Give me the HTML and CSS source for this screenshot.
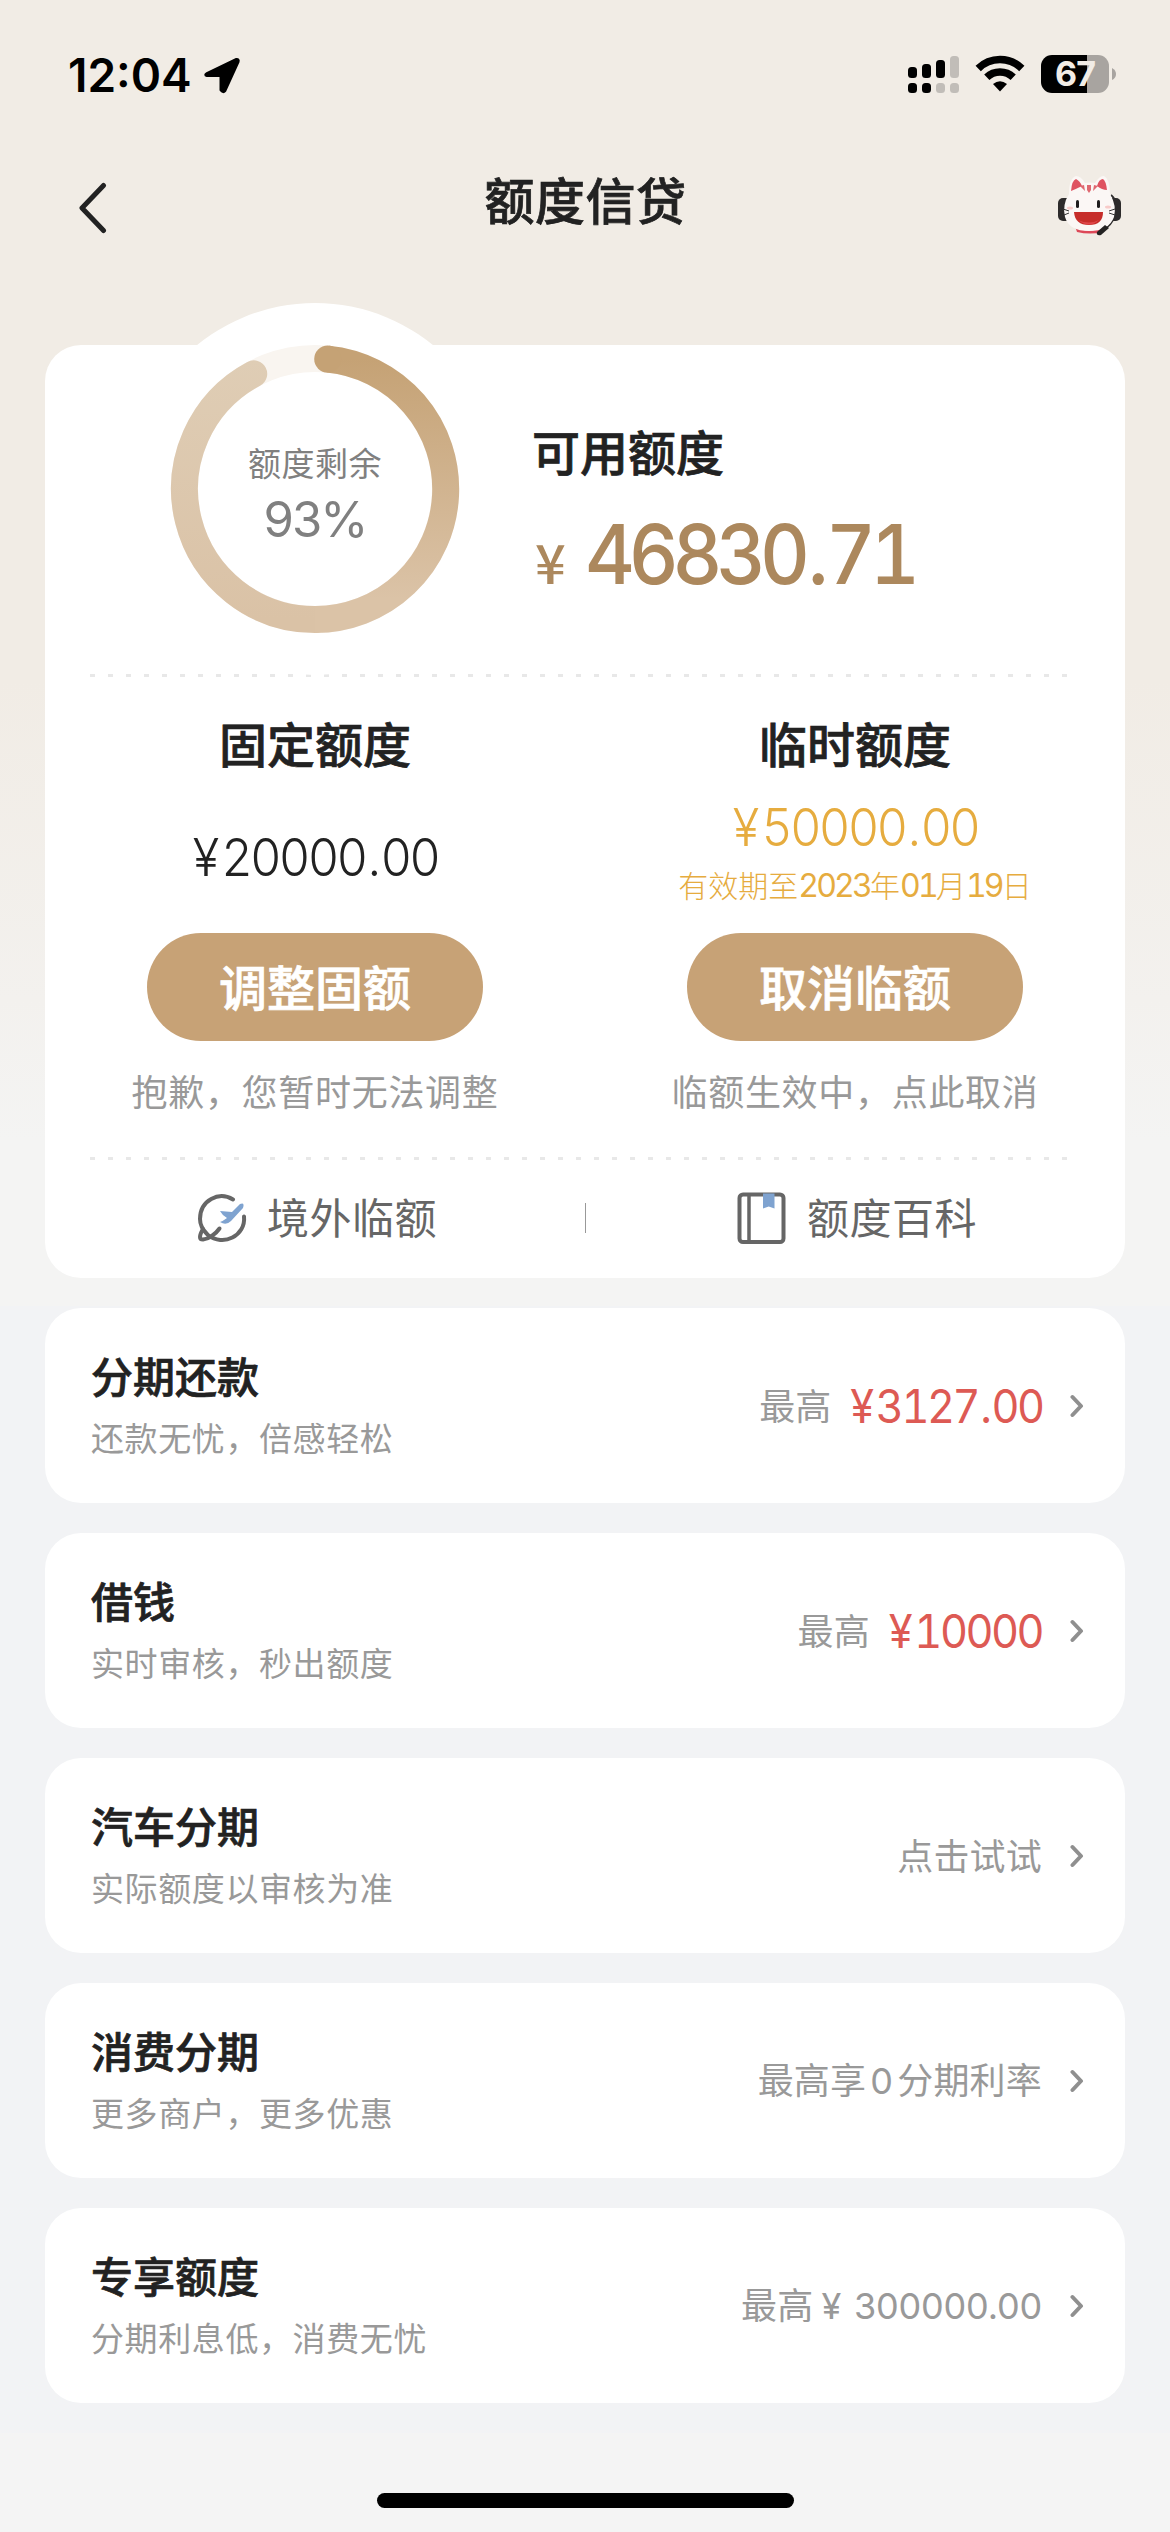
FILE: index.html
```html
<!DOCTYPE html>
<html lang="zh-CN">
<head>
<meta charset="utf-8">
<title>额度信贷</title>
<link rel="stylesheet" href="styles.css">
</head>
<body>
<div class="screen">
  <header class="status">
    <div class="status-left">
      <span class="time">12:04</span>
      <svg class="location" width="38" height="38" viewBox="0 0 38 38"><path d="M4 17.500L33 3.500Q36 3 35 6L22 34.500Q20 37 18 34V19.500H4Q1.500 18.800 4 17.500Z" stroke="#000" stroke-width="3" stroke-linejoin="round"/></svg>
    </div>
    <div class="status-right">
      <svg width="51" height="38" viewBox="0 0 51 38">
        <g><rect x="0" y="12" width="9" height="11" rx="3.500"/><rect x="14" y="9" width="9" height="14" rx="3.500"/><rect x="28" y="5" width="9" height="18" rx="3.500"/><rect x="0" y="28" width="9" height="10" rx="3.500"/><rect x="14" y="28" width="9" height="10" rx="3.500"/></g>
        <g fill="#c1bdb8"><rect x="42" y="1" width="9" height="22" rx="3.500"/><rect x="28" y="28" width="9" height="10" rx="3.500"/><rect x="42" y="28" width="9" height="10" rx="3.500"/></g>
      </svg>
      <svg class="wifi" width="50" height="38" viewBox="0 0 50 38">
        <g fill="none" stroke="#000" stroke-width="7.500"><path d="M3.200 13.500A31 31 0 0 1 46.800 13.500"/><path d="M11.800 22.300A19 19 0 0 1 38.200 22.300"/></g>
        <path d="M18 29Q25 23.500 32 29L25 36.500Z"/>
      </svg>
      <div class="battery"><span class="battery-body">67</span><svg width="4" height="12" viewBox="0 0 4 12"><path d="M0 0Q4 2 4 6T0 12Z" fill="#a8a4a0"/></svg></div>
    </div>
  </header>

  <nav class="navbar">
    <svg class="back" width="30" height="52" viewBox="0 0 30 52"><path d="M26.500 3.500L5 26L26.500 48.500" fill="none" stroke="#222" stroke-width="5" stroke-linecap="round" stroke-linejoin="round"/></svg>
    <h1 class="nav-title">额度信贷</h1>
    <svg class="mascot" width="64" height="62" viewBox="0 0 64 62">
      <rect x="0" y="23" width="13" height="23" rx="5" fill="#2d2b2b"/><rect x="50" y="23" width="13" height="23" rx="5" fill="#2d2b2b"/>
      <path d="M53 20Q59 25 58 34Q59 44 47 54" fill="none" stroke="#2d2b2b" stroke-width="2"/>
      <path d="M17 51Q31 61 47 50L45 57Q32 60 19 57Z" fill="#dd4858"/>
      <path d="M11 19Q11 3 18 1Q23 1 27 8Q31 7 37 8Q42 0 46 1Q52 4 52 19Q59 31 56 42Q51 56 31 56Q11 56 7 42Q4 30 11 19Z" fill="#fbf7f5"/>
      <path d="M13 16Q14 5 18 4Q22 6 24 11Q18 14 13 16Z" fill="#df5361"/><path d="M39 11Q41 4 45 4Q48 6 49 15Q44 15 39 11Z" fill="#df5361"/>
      <path d="M29 10H33V15L31 18L29 15ZM22 11L27 16L26 10ZM36 10L35 16L40 11Z" fill="#df6870"/>
      <rect x="18" y="25" width="3" height="8" rx="1.500" fill="#1e1c1c"/><rect x="39" y="25" width="3" height="8" rx="1.500" fill="#1e1c1c"/>
      <ellipse cx="12" cy="33" rx="3" ry="1.500" fill="#f8cbc9"/><ellipse cx="50" cy="32" rx="3" ry="1.500" fill="#f8cbc9"/>
      <path d="M5 34L11 36M6 40L11 38M57 34L51 36M57 40L51 38" stroke="#333" stroke-width="1"/>
      <path d="M16 37H45Q45 50 31 50Q17 50 16 37Z" fill="#c62d2a"/><path d="M20 45Q31 50 41 45Q36 49.500 31 49.500T20 45Z" fill="#e0474a"/>
      <path d="M39 57L47 50L51 53L43 60Q38 61 39 57Z" fill="#242222"/>
    </svg>
  </nav>

  <main class="content">
    <section class="card hero">
      <div class="summary">
        <div class="gauge">
          <svg width="372" height="372" viewBox="-186 -186 372 372">
            <defs>
              <linearGradient id="g1" x1="0" y1="-130" x2="0" y2="110" gradientUnits="userSpaceOnUse"><stop offset="0" stop-color="#c5a275"/><stop offset="1" stop-color="#dbc3a7"/></linearGradient>
              <linearGradient id="g2" x1="0" y1="130" x2="0" y2="-130" gradientUnits="userSpaceOnUse"><stop offset="0" stop-color="#dac2a6"/><stop offset="1" stop-color="#dfcdb5"/></linearGradient>
            </defs>
            <circle r="186" fill="#fff"/>
            <g fill="none" stroke-width="27">
              <circle r="130.500" stroke="#f9f5f0"/>
              <path d="M0 130.500A130.500 130.500 0 0 1 -61.300 -115.200" stroke="url(#g2)" stroke-linecap="round"/>
              <path d="M12.700 -129.900A130.500 130.500 0 0 1 0 130.500" stroke="url(#g1)"/>
            </g>
            <circle cx="12.700" cy="-129.900" r="13.500" fill="#c5a275"/>
          </svg>
          <div class="gauge-text"><span class="gauge-label">额度剩余</span><span class="gauge-value">93%</span></div>
        </div>
        <div class="available">
          <h2 class="heading">可用额度</h2>
          <p class="total"><span class="total-sign">¥</span><span class="num total-num">46830<i class="point">.</i>71</span></p>
        </div>
      </div>
      <div class="dash"></div>
      <div class="limits">
        <div class="limit">
          <h2 class="heading">固定额度</h2>
          <div class="limit-body"><span class="num amount"><i class="sign">¥</i>20000<i class="point">.</i>00</span></div>
          <button class="pill">调整固额</button>
          <p class="hint">抱歉，您暂时无法调整</p>
        </div>
        <div class="limit">
          <h2 class="heading">临时额度</h2>
          <div class="limit-body gold"><span class="num amount"><i class="sign">¥</i>50000<i class="point">.</i>00</span><span class="expiry">有效期至<b>2023</b>年<b>01</b>月<b>19</b>日</span></div>
          <button class="pill">取消临额</button>
          <p class="hint">临额生效中，点此取消</p>
        </div>
      </div>
      <div class="dash"></div>
      <div class="links">
        <a class="link">
          <svg width="50" height="52" viewBox="0 0 50 52"><g fill="none" stroke="#666" stroke-width="4" stroke-linecap="round"><path d="M36 7.500C22 -1 3 8 3 27C3 33 6 38 10 42"/><path d="M47 24.500C49 44 26 55 11 43"/><path d="M6 37C2 44 2 47.500 6 47.500C11 47 18 43 22.500 36.500"/></g><path d="M23 19L35 20L43 12Q48 10 46 16L34 29Q29 34 23 30Q26 29 30 26Q25 23 23 19Z" fill="#7fa3d0"/></svg>
          <span>境外临额</span>
        </a>
        <a class="link">
          <svg width="50" height="52" viewBox="0 0 50 52"><g fill="none" stroke="#666" stroke-width="4"><rect x="2.500" y="2.500" width="44" height="47.500" rx="3.500"/><path d="M12 2V50" stroke-width="3.500"/></g><path d="M26 1.500H37.500V16.500L31.700 14.500L26 16.500Z" fill="#7fa3d0"/></svg>
          <span>额度百科</span>
        </a>
      </div>
    </section>

    <section class="card row">
      <div class="row-main"><h3>分期还款</h3><p>还款无忧，倍感轻松</p></div>
      <div class="row-side"><span>最高</span><span class="num price price-long"><i class="sign">¥</i>3127<i class="point">.</i>00</span></div>
      <svg class="chev" width="14" height="24" viewBox="0 0 14 24"><path d="M2.500 3L11 12L2.500 21"/></svg>
    </section>
    <section class="card row">
      <div class="row-main"><h3>借钱</h3><p>实时审核，秒出额度</p></div>
      <div class="row-side"><span>最高</span><span class="num price"><i class="sign">¥</i>10000</span></div>
      <svg class="chev" width="14" height="24" viewBox="0 0 14 24"><path d="M2.500 3L11 12L2.500 21"/></svg>
    </section>
    <section class="card row">
      <div class="row-main"><h3>汽车分期</h3><p>实际额度以审核为准</p></div>
      <div class="row-side"><span>点击试试</span></div>
      <svg class="chev" width="14" height="24" viewBox="0 0 14 24"><path d="M2.500 3L11 12L2.500 21"/></svg>
    </section>
    <section class="card row">
      <div class="row-main"><h3>消费分期</h3><p>更多商户，更多优惠</p></div>
      <div class="row-side"><span>最高享<i class="zero">0</i>分期利率</span></div>
      <svg class="chev" width="14" height="24" viewBox="0 0 14 24"><path d="M2.500 3L11 12L2.500 21"/></svg>
    </section>
    <section class="card row">
      <div class="row-main"><h3>专享额度</h3><p>分期利息低，消费无忧</p></div>
      <div class="row-side"><span>最高<i class="figure"><i class="yen">¥</i>300000.00</i></span></div>
      <svg class="chev" width="14" height="24" viewBox="0 0 14 24"><path d="M2.500 3L11 12L2.500 21"/></svg>
    </section>
  </main>

  <footer class="home"><div class="home-bar"></div></footer>
</div>
</body>
</html>
```
FILE: styles.css
```css
* { box-sizing: border-box; margin: 0; padding: 0; }
body { width: 1170px; font-family: "Noto Sans CJK SC", sans-serif; color: #222; }
svg { display: block; flex: none; }
i { font-style: normal; }

.screen {
  width: 1170px; height: 2532px; display: flex; flex-direction: column; overflow: hidden;
  background: linear-gradient(#f1ece5 0, #f1ece5 680px, #f3f1ee 1000px, #f4f4f3 1140px, #f4f4f3 1306px, #f2f3f5 1306px);
}

.status { height: 150px; padding: 0 54px 0 68px; display: flex; justify-content: space-between; align-items: center; }
.status-left { display: flex; align-items: center; }
.time { width: 135px; font: 600 46px/60px Inter, sans-serif; color: #000; white-space: nowrap; }
.status-right { display: flex; align-items: center; height: 38px; margin-top: -2px; }
.wifi { margin-left: 16px; }
.battery { display: flex; align-items: center; gap: 3px; margin-left: 16px; }
.battery-body {
  width: 68px; height: 38px; border-radius: 11px; text-align: center;
  background: linear-gradient(90deg, #000 46px, #a8a4a0 46px);
  font: 700 34px/38px Inter, sans-serif; letter-spacing: -1px; color: #f1ece6;
}

.navbar { height: 195px; padding: 26px 48px 0 77px; display: grid; grid-template-columns: 64px 1fr 64px; align-items: start; }
.back { margin-top: 6px; }
.nav-title { font-size: 50px; font-weight: 500; line-height: 72px; margin: -14px 14px 0 -14px; letter-spacing: 0.5px; text-align: center; }
.nav-title, .heading, .row h3, .pill { -webkit-text-stroke: 0.7px currentColor; }
.mascot { margin-top: -1px; justify-self: end; }

.content { height: 2088px; padding: 0 45px; display: flex; flex-direction: column; gap: 30px; }
.card { background: #fff; border-radius: 36px; flex: none; }

/* Tight tabular figures for money values */
.num { display: inline-block; font-family: Inter, sans-serif; font-variant-numeric: tabular-nums; letter-spacing: -0.058em; transform: scaleX(0.94); white-space: nowrap; }
.point { margin: 0 0.05em; }
.sign { margin-right: 0.1em; }

.hero { height: 933px; }
.summary { height: 329px; display: flex; padding-left: 84px; }
.gauge { width: 372px; height: 372px; margin-top: -42px; display: grid; }
.gauge > * { grid-area: 1 / 1; }
.gauge-text { display: flex; flex-direction: column; align-items: center; padding-top: 137px; color: #808080; z-index: 1; }
.gauge-label { font-size: 33px; line-height: 44px; letter-spacing: 0.5px; }
.gauge-value { font: 400 49px/60px Inter, sans-serif; letter-spacing: -2px; margin-top: 6px; }
.available { padding: 70px 0 0 31px; }
.heading { font-size: 48px; font-weight: 500; line-height: 70px; }
.total { display: flex; align-items: baseline; color: #ac885d; line-height: 100px; height: 100px; margin-top: 20px; padding-left: 3px; }
.total-sign { width: 50px; font-size: 54px; font-weight: 500; line-height: 100px; }
.total-num { font-size: 82px; font-weight: 500; letter-spacing: -0.08em; transform-origin: left; }

.dash { height: 3px; margin: 0 57px 0 45px; background: repeating-linear-gradient(90deg, #e8e8e8 0 5px, #fff 5px 18px); }

.limits { height: 480px; display: grid; grid-template-columns: 1fr 1fr; }
.limit { display: flex; flex-direction: column; align-items: center; padding-top: 30px; }
.limit-body { height: 156px; display: flex; flex-direction: column; align-items: center; padding-top: 43px; }
.gold { color: #e6ac3f; padding-top: 13px; }
.amount { font-size: 52px; font-weight: 350; line-height: 76px; }
.expiry { font-size: 30px; font-weight: 300; line-height: 40px; margin-top: -2px; white-space: nowrap; }
.expiry b { font-family: Inter, sans-serif; font-variant-numeric: tabular-nums; font-weight: 400; font-size: 32px; letter-spacing: -2.8px; }
.pill { width: 336px; height: 108px; padding-bottom: 4px; border: 0; border-radius: 54px; background: #c7a276; color: #fff; font: 500 48px/104px "Noto Sans CJK SC", sans-serif; }
.hint { margin-top: 23px; font-size: 36px; line-height: 52px; letter-spacing: 0.7px; color: #999; white-space: nowrap; }

.links { height: 118px; padding-bottom: 2px; display: grid; grid-template-columns: 1fr 1fr; position: relative; }
.links::after { content: ""; position: absolute; left: 540px; top: 43px; width: 1px; height: 30px; background: #999; }
.link { display: flex; align-items: center; gap: 20px; padding-left: 152px; font-size: 42px; line-height: 60px; letter-spacing: 0.5px; color: #666; }
.link span { padding-bottom: 4px; }

.row { height: 195px; padding: 0 41px 0 46px; display: flex; align-items: center; }
.row-main { flex: 1; padding-bottom: 5px; }
.row h3 { font-size: 42px; font-weight: 500; line-height: 60px; }
.row p { font-size: 33px; line-height: 48px; margin-top: 8px; letter-spacing: 0.6px; color: #999; }
.row-side { display: flex; align-items: center; font-size: 36px; line-height: 52px; letter-spacing: 0.2px; color: #999; margin-right: 28px; padding-bottom: 3px; white-space: nowrap; }
.price { font-size: 46px; font-weight: 400; color: #dd5a54; margin: 4px 0 0 9px; transform-origin: right; }
.price-long { margin-left: 6px; }
.zero { font-family: Inter, sans-serif; margin: 0 4px; }
.figure { font-family: Inter, sans-serif; letter-spacing: -0.2px; }
.yen { margin: 0 13px 0 8px; }
.chev path { fill: none; stroke: #8f8f8f; stroke-width: 4; stroke-linecap: round; stroke-linejoin: round; }

.home { height: 99px; background: #f4f4f4; padding-top: 60px; }
.home-bar { width: 417px; height: 15px; border-radius: 8px; background: #000; margin: 0 auto; }
```
